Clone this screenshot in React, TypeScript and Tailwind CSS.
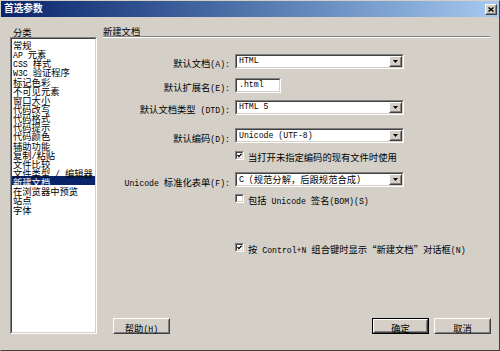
import React from 'react';

const categories = [
  '常规', 'AP 元素', 'CSS 样式', 'W3C 验证程序', '标记色彩', '不可见元素', '窗口大小',
  '代码改写', '代码格式', '代码提示', '代码颜色', '辅助功能', '复制/粘贴', '文件比较',
  '文件类型 / 编辑器', '新建文档', '在浏览器中预览', '站点', '字体',
];

// SimSun-like mix: ASCII runs in a narrow mono, CJK in Noto
function T({ children }: { children: string }) {
  const parts = children.split(/([\x20-\x7e]+)/).filter(Boolean);
  return (
    <>
      {parts.map((p, i) =>
        /^[\x20-\x7e]+$/.test(p) ? (
          <span key={i} className="font-['Liberation_Mono',monospace] text-[8.2px] whitespace-pre">{p}</span>
        ) : (
          <span key={i} className="font-['Noto_Sans_CJK_SC',sans-serif] text-[9.3px]">{p}</span>
        )
      )}
    </>
  );
}

function Sunken({ className = '', children }: { className?: string; children?: React.ReactNode }) {
  return (
    <div className={`border border-t-[#808080] border-l-[#808080] border-r-white border-b-white ${className}`}>
      <div className="w-full h-full border border-t-[#404040] border-l-[#404040] border-r-[#d4d0c8] border-b-[#d4d0c8] bg-white overflow-hidden">
        {children}
      </div>
    </div>
  );
}

function Raised({ className = '', children }: { className?: string; children?: React.ReactNode }) {
  return (
    <div className={`border border-t-white border-l-white border-r-[#404040] border-b-[#404040] bg-[#d4d0c8] ${className}`}>
      <div className="w-full h-full border border-t-[#d4d0c8] border-l-[#d4d0c8] border-r-[#808080] border-b-[#808080] flex items-center justify-center">
        {children}
      </div>
    </div>
  );
}

function Select({ value }: { value: string }) {
  return (
    <Sunken className="w-[169px] h-[15px]">
      <div className="flex h-full">
        <div className="flex-1 flex items-center pl-[2px] leading-none text-black whitespace-nowrap">
          <T>{value}</T>
        </div>
        <Raised className="w-[13px] h-full">
          <svg width="5" height="3" viewBox="0 0 5 3">
            <path d="M0 0h5L2.5 3z" fill="#000" />
          </svg>
        </Raised>
      </div>
    </Sunken>
  );
}

function Row({ label, children, className = '' }: { label: string; children: React.ReactNode; className?: string }) {
  return (
    <div className={`flex items-center gap-[5px] ${className}`}>
      <div className="w-[127px] text-right leading-none text-black whitespace-nowrap">
        <T>{label}</T>
      </div>
      {children}
    </div>
  );
}

function Check({ label, checked, className = '' }: { label: string; checked?: boolean; className?: string }) {
  return (
    <div className={`flex items-center gap-[4px] pl-[132px] h-[9px] ${className}`}>
      <Sunken className="w-[9px] h-[9px]">
        {checked && (
          <svg width="5" height="5" viewBox="0 0 5 5" className="block">
            <path d="M0.5 2l1.5 1.6L4.6 0.6" stroke="#000" strokeWidth="1.3" fill="none" />
          </svg>
        )}
      </Sunken>
      <div className="leading-none text-black whitespace-nowrap">
        <T>{label}</T>
      </div>
    </div>
  );
}

export default function App() {
  return (
    <div className="w-[500px] h-[351px] bg-[#d4d0c8] border border-t-[#d4d0c8] border-l-[#d4d0c8] border-r-[#404040] border-b-[#404040] flex flex-col overflow-hidden">
      {/* Title bar */}
      <div className="h-[16px] flex items-center justify-between pl-[3px] pr-[2px] bg-gradient-to-r from-[#0a246a] to-[#a6caf0]">
        <span className="font-['Noto_Sans_CJK_SC',sans-serif] text-[9.7px] font-bold text-white leading-none">首选参数</span>
        <Raised className="w-[12px] h-[11px]">
          <svg width="6" height="5" viewBox="0 0 6 5">
            <path d="M0.5 0.5l5 4M5.5 0.5l-5 4" stroke="#000" strokeWidth="1.4" />
          </svg>
        </Raised>
      </div>

      {/* Body */}
      <div className="flex gap-[6px] pl-[9px] pt-[6px]">
        {/* Category list */}
        <div className="w-[87px] flex flex-col">
          <div className="h-[14px] pl-[3px] leading-[14px] text-black">
            <T>分类</T>
          </div>
          <Sunken className="h-[297px]">
            {categories.map((c) => (
              <div
                key={c}
                className={`h-[9.15px] leading-[9.15px] pl-[1px] whitespace-nowrap ${c === '新建文档' ? 'bg-[#0a246a] text-white' : 'text-black'}`}
              >
                <T>{c}</T>
              </div>
            ))}
          </Sunken>
        </div>

        {/* Settings panel */}
        <div className="w-[388px] h-[311px] flex flex-col">
          <div className="h-[13px] leading-[13px] text-black">
            <T>新建文档</T>
          </div>
          <div className="h-[2px] w-[387px] border-t border-t-[#808080] border-b border-b-white" />

          <Row label="默认文档(A):" className="mt-[15px]">
            <Select value="HTML" />
          </Row>
          <Row label="默认扩展名(E):" className="mt-[8px]">
            <Sunken className="w-[46px] h-[15px]">
              <div className="h-full flex items-center pl-[2px] leading-none text-black">
                <T>.html</T>
              </div>
            </Sunken>
          </Row>
          <Row label="默认文档类型 (DTD):" className="mt-[6px]">
            <Select value="HTML 5" />
          </Row>
          <Row label="默认编码(D):" className="mt-[12px]">
            <Select value="Unicode (UTF-8)" />
          </Row>
          <Check label="当打开未指定编码的现有文件时使用" checked className="mt-[7px]" />
          <Row label="Unicode 标准化表单(F):" className="mt-[12px]">
            <Select value="C (规范分解，后跟规范合成)" />
          </Row>
          <Check label="包括 Unicode 签名(BOM)(S)" className="mt-[6px]" />
          <Check label="按 Control+N 组合键时显示“新建文档”对话框(N)" checked className="mt-[40px]" />

          <div className="flex-1" />

          <div className="flex items-center justify-between h-[16px]">
            <Raised className="ml-[10px] w-[57px] h-[16px]">
              <span className="leading-none text-black"><T>帮助(H)</T></span>
            </Raised>
            <div className="flex gap-[5px]">
              <div className="border border-black">
                <Raised className="w-[55px] h-[14px]">
                  <span className="leading-none text-black"><T>确定</T></span>
                </Raised>
              </div>
              <Raised className="w-[57px] h-[16px]">
                <span className="leading-none text-black"><T>取消</T></span>
              </Raised>
            </div>
          </div>
        </div>
      </div>
    </div>
  );
}
